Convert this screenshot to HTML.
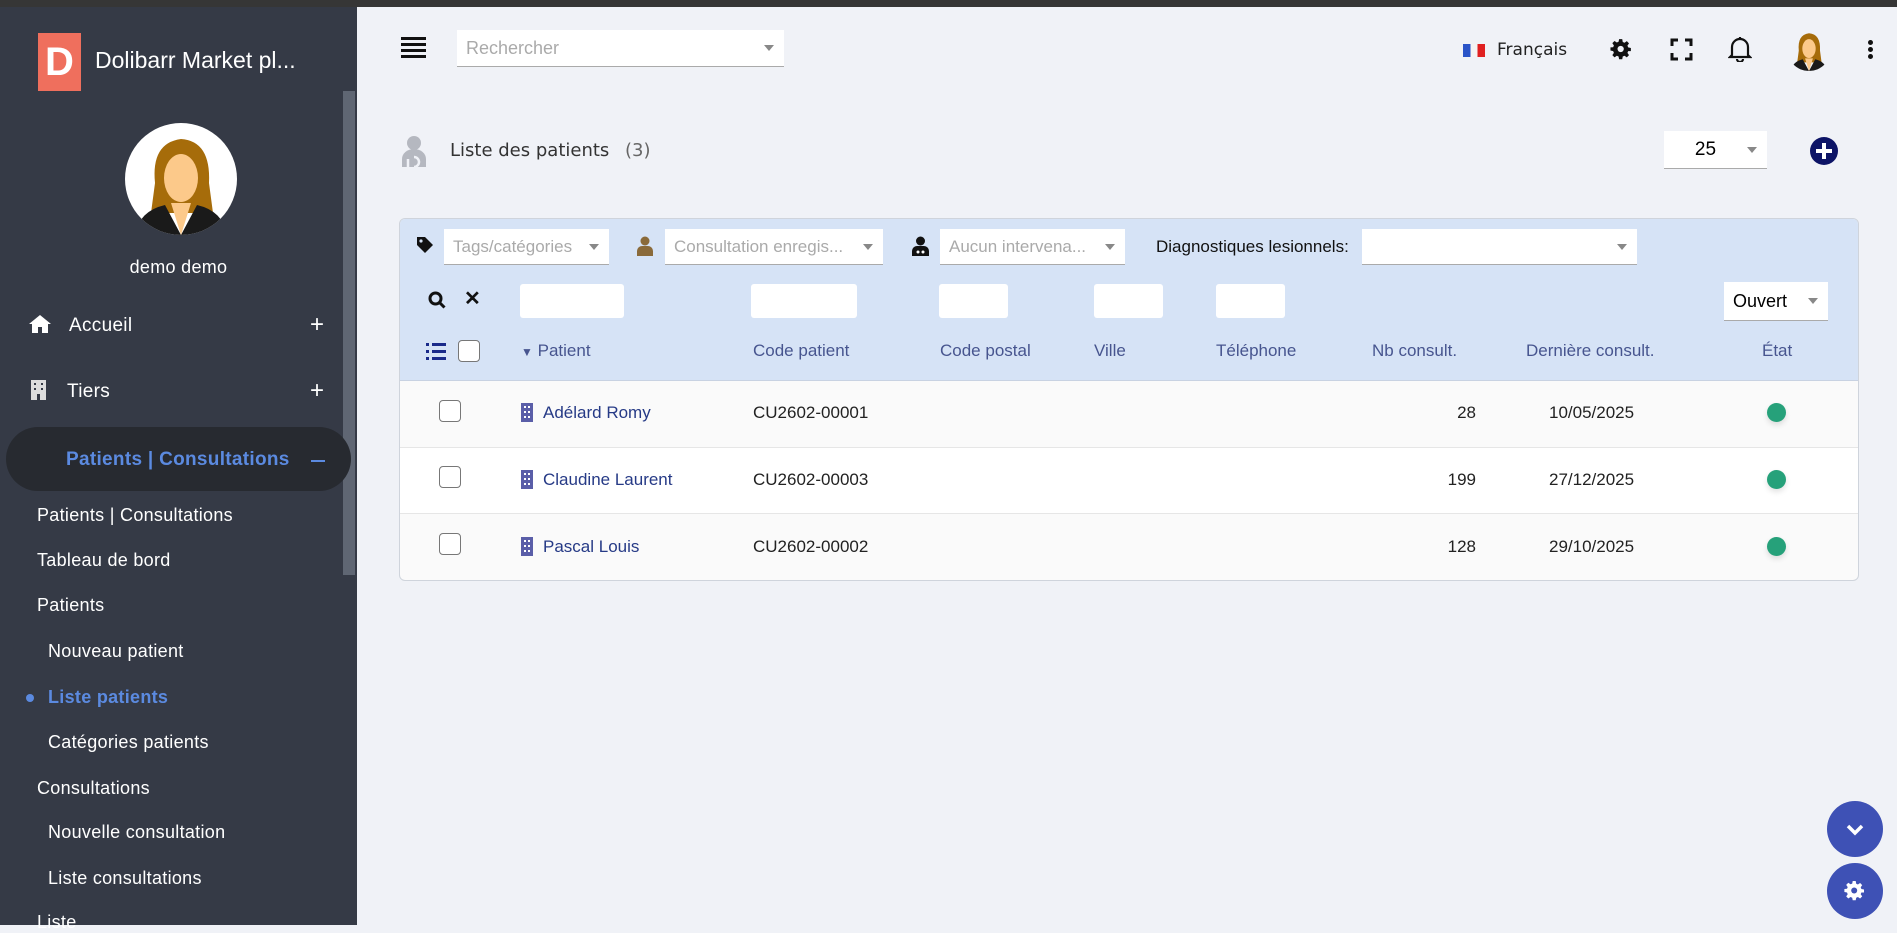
<!DOCTYPE html>
<html><head><meta charset="utf-8"><style>
*{box-sizing:border-box;margin:0;padding:0}
body{width:1897px;height:918px;overflow:hidden;background:#f0f2f7;font-family:"Liberation Sans",sans-serif;position:relative}
.a{position:absolute}
.sb{left:0;top:0;width:357px;height:918px;background:#353a46}
.side{color:#fff;font-size:18px;letter-spacing:.3px;white-space:nowrap}
.sel{background:#fff;border-bottom:1px solid #aaa;color:#aaa;font-size:17px;padding-left:9px;display:flex;align-items:center;white-space:nowrap;overflow:hidden}
.caret{position:absolute;right:10px;top:50%;margin-top:-3px;border-left:5px solid transparent;border-right:5px solid transparent;border-top:6px solid #888}
.inp{background:#fff;border-radius:3px;height:34px;top:284px}
.th{top:341px;color:#47558f;font-size:17px}
.td{font-size:17px;color:#222}
.cb{width:22px;height:22px;border:1.5px solid #777;border-radius:4px;background:#fff}
.nm{color:#263a86}
.dot{width:19px;height:19px;border-radius:50%;background:#26a17a;box-shadow:0 3px 6px rgba(0,0,0,.12)}
.bld{width:11px;height:19px;background:#5a5ea8;background-image:linear-gradient(90deg,transparent 3px,#fff 3px 4px,transparent 4px 7px,#fff 7px 8px,transparent 8px),linear-gradient(#5a5ea8 0 0);}
</style></head><body>
<div class="a" style="left:0;top:0;width:1897px;height:7px;background:#363636"></div>
<div class="a sb" style="top:7px"></div>
<div class="a" style="left:343px;top:91px;width:12px;height:484px;background:#5f6673"></div>
<div class="a" style="left:38px;top:33px;width:43px;height:58px;background:#ef6f5d;color:#fff;font:bold 40px 'Liberation Sans';text-align:center;line-height:58px">D</div>
<div class="a side" style="left:95px;top:47px;font-size:23px;letter-spacing:0">Dolibarr Market pl...</div>
<div class="a" style="left:125px;top:123px;width:112px;height:112px;border-radius:50%;background:#fff;overflow:hidden">
<svg width="112" height="112" viewBox="0 0 112 112"><path d="M30 60 Q26 20 56 16 Q86 18 84 60 L88 90 L26 90 Z" fill="#a66c0a"/><ellipse cx="56" cy="55" rx="17" ry="24" fill="#fcc98a"/><path d="M40 40 Q56 18 74 42 L74 30 Q56 10 38 32Z" fill="#a66c0a"/><path d="M10 112 Q14 88 40 82 L56 112 L72 82 Q98 88 102 112Z" fill="#1a1a1a"/><path d="M46 80 L56 112 L66 80Z" fill="#fcc98a"/></svg></div>
<div class="a side" style="left:0;width:357px;text-align:center;top:257px;font-size:18px">demo demo</div>
<svg class="a" style="left:29px;top:314px" width="22" height="19" viewBox="0 0 22 19"><path d="M11 1L0 10h3v9h6v-6h4v6h6v-9h3z" fill="#fff"/></svg>
<div class="a side" style="left:69px;top:315px;font-size:19px">Accueil</div>
<div class="a side" style="left:310px;top:311px;font-size:24px">+</div>
<svg class="a" style="left:30px;top:380px" width="17" height="20" viewBox="0 0 17 20"><rect x="1" y="0" width="15" height="20" fill="#ddd"/><g fill="#353a46"><rect x="4" y="3" width="2" height="2"/><rect x="11" y="3" width="2" height="2"/><rect x="4" y="8" width="2" height="2"/><rect x="11" y="8" width="2" height="2"/><rect x="7" y="14" width="3" height="6"/></g></svg>
<div class="a side" style="left:67px;top:381px;font-size:19px">Tiers</div>
<div class="a side" style="left:310px;top:377px;font-size:24px">+</div>
<div class="a" style="left:6px;top:427px;width:345px;height:64px;border-radius:32px;background:#272a30"></div>
<div class="a side" style="left:66px;top:449px;font-size:19px;color:#5b8ae0;font-weight:bold">Patients | Consultations</div>
<div class="a" style="left:311px;top:460px;width:14px;height:2px;background:#5b8ae0"></div>
<div class="a side" style="left:37px;top:505px">Patients | Consultations</div>
<div class="a side" style="left:37px;top:550px">Tableau de bord</div>
<div class="a side" style="left:37px;top:595px">Patients</div>
<div class="a side" style="left:48px;top:641px">Nouveau patient</div>
<div class="a" style="left:26px;top:694px;width:8px;height:8px;border-radius:50%;background:#5b8ae0"></div>
<div class="a side" style="left:48px;top:687px;color:#5b8ae0;font-weight:bold">Liste patients</div>
<div class="a side" style="left:48px;top:732px">Catégories patients</div>
<div class="a side" style="left:37px;top:778px">Consultations</div>
<div class="a side" style="left:48px;top:822px">Nouvelle consultation</div>
<div class="a side" style="left:48px;top:868px">Liste consultations</div>
<div class="a side" style="left:37px;top:912px">Liste</div>

<div class="a" style="left:401px;top:37px;width:25px;height:3px;background:#111;box-shadow:0 6px 0 #111,0 12px 0 #111,0 18px 0 #111"></div>
<div class="a sel" style="left:457px;top:30px;width:327px;height:37px;font-size:18px;border-bottom:1.5px solid #aaa">Rechercher<span class="caret"></span></div>
<div class="a" style="left:1463px;top:44px;width:22px;height:13px;background:linear-gradient(90deg,#2a54c8 33%,#f4f4f4 33% 66%,#e02020 66%)"></div>
<div class="a" style="left:1497px;top:40px;color:#222;font-family:'DejaVu Sans',sans-serif;font-size:17px">Français</div>
<svg class="a" style="left:1609px;top:37px" width="25" height="25" viewBox="0 0 24 24"><path fill="#111" d="M21 13.5v-3l-2.6-.5-.7-1.7 1.5-2.2-2.1-2.1-2.2 1.5-1.7-.7L12.7 2h-3l-.5 2.6-1.7.7-2.2-1.5-2.1 2.1 1.5 2.2-.7 1.7L1.4 10v3l2.6.5.7 1.7-1.5 2.2 2.1 2.1 2.2-1.5 1.7.7.5 2.6h3l.5-2.6 1.7-.7 2.2 1.5 2.1-2.1-1.5-2.2.7-1.7z"/><circle cx="11.2" cy="11.5" r="3" fill="#f0f2f7"/></svg>
<svg class="a" style="left:1670px;top:38px" width="23" height="23" viewBox="0 0 23 23" fill="none" stroke="#111" stroke-width="3"><path d="M2 8V2h6M15 2h6v6M21 15v6h-6M8 21H2v-6"/></svg>
<svg class="a" style="left:1728px;top:36px" width="24" height="26" viewBox="0 0 24 26" fill="none" stroke="#111" stroke-width="2.2"><path d="M4 19V11a8 8 0 0116 0v8l2 2H2z"/><path d="M9 23a3 3 0 006 0"/><path d="M12 1v2"/></svg>
<div class="a" style="left:1787px;top:27px;width:44px;height:44px;border-radius:50%;overflow:hidden"><svg width="44" height="44" viewBox="0 0 112 112"><path d="M30 60 Q26 20 56 16 Q86 18 84 60 L88 90 L26 90 Z" fill="#a66c0a"/><ellipse cx="56" cy="55" rx="17" ry="24" fill="#fcc98a"/><path d="M10 112 Q14 88 40 82 L56 112 L72 82 Q98 88 102 112Z" fill="#1a1a1a"/><path d="M46 80 L56 112 L66 80Z" fill="#fcc98a"/></svg></div>
<div class="a" style="left:1868px;top:40px;width:5px;height:5px;border-radius:50%;background:#111;box-shadow:0 7px 0 #111,0 14px 0 #111"></div>

<svg class="a" style="left:400px;top:135px" width="28" height="32" viewBox="0 0 28 32"><circle cx="14" cy="8" r="7" fill="#b5b8c0"/><path d="M2 32V24a12 10 0 0124 0v8z" fill="#b5b8c0"/><path d="M8 24v8M14 22a5 5 0 010 10" stroke="#f0f2f7" stroke-width="2.5" fill="none"/></svg>
<div class="a" style="left:450px;top:140px;color:#333;font-family:'DejaVu Sans',sans-serif;font-size:18px">Liste des patients <span style="color:#666;margin-left:10px">(3)</span></div>
<div class="a sel" style="left:1664px;top:131px;width:103px;height:38px;color:#000;font-size:19px;justify-content:center;padding:0 20px 0 0">25<span class="caret"></span></div>
<div class="a" style="left:1810px;top:137px;width:28px;height:28px;border-radius:50%;background:#0d1466"><div class="a" style="left:6px;top:12px;width:16px;height:4px;background:#fff"></div><div class="a" style="left:12px;top:6px;width:4px;height:16px;background:#fff"></div></div>

<div class="a" style="left:399px;top:218px;width:1460px;height:363px;border:1px solid #cfd4dc;border-radius:6px;background:#fafafa;overflow:hidden">
<div class="a" style="left:0;top:0;width:1460px;height:162px;background:#d6e3f6;border-bottom:1px solid #c8d2e2"></div>
<div class="a" style="left:0;top:228px;width:1460px;height:67px;background:#fff;border-top:1px solid #e6e6e6;border-bottom:1px solid #e6e6e6"></div>
</div>
<svg class="a" style="left:416px;top:236px" width="18" height="18" viewBox="0 0 18 18"><path d="M1 1h8l8 8-8 8-8-8z" fill="#111"/><circle cx="5" cy="5" r="1.6" fill="#d6e3f6"/></svg>
<div class="a sel" style="left:444px;top:229px;width:165px;height:36px">Tags/catégories<span class="caret"></span></div>
<svg class="a" style="left:637px;top:236px" width="16" height="20" viewBox="0 0 16 20"><circle cx="8" cy="5" r="4.5" fill="#8a6a3a"/><path d="M0 20v-5a5 5 0 015-5h6a5 5 0 015 5v5z" fill="#8a6a3a"/></svg>
<div class="a sel" style="left:665px;top:229px;width:218px;height:36px">Consultation enregis...<span class="caret"></span></div>
<svg class="a" style="left:912px;top:236px" width="17" height="20" viewBox="0 0 17 20"><circle cx="8.5" cy="5" r="4.5" fill="#111"/><path d="M0 20v-5a5 5 0 015-5h7a5 5 0 015 5v5z" fill="#111"/><circle cx="6" cy="16" r="1.5" fill="#fff"/><circle cx="11" cy="16" r="1.5" fill="#fff"/></svg>
<div class="a sel" style="left:940px;top:229px;width:185px;height:36px">Aucun intervena...<span class="caret"></span></div>
<div class="a" style="left:1156px;top:237px;font-size:17px;color:#111">Diagnostiques lesionnels:</div>
<div class="a sel" style="left:1362px;top:229px;width:275px;height:36px"><span class="caret"></span></div>

<svg class="a" style="left:428px;top:291px" width="18" height="18" viewBox="0 0 18 18" fill="none" stroke="#111" stroke-width="3"><circle cx="7.5" cy="7.5" r="5.5"/><path d="M11.5 11.5l5 5"/></svg>
<div class="a" style="left:464px;top:286px;font-size:20px;font-weight:bold;color:#111">✕</div>
<div class="a inp" style="left:520px;width:104px"></div>
<div class="a inp" style="left:751px;width:106px"></div>
<div class="a inp" style="left:939px;width:69px"></div>
<div class="a inp" style="left:1094px;width:69px"></div>
<div class="a inp" style="left:1216px;width:69px"></div>
<div class="a sel" style="left:1724px;top:282px;width:104px;height:39px;color:#000;font-size:18px">Ouvert<span class="caret"></span></div>

<svg class="a" style="left:426px;top:343px" width="20" height="17" viewBox="0 0 20 17" fill="#1a2a8a"><rect x="0" y="0" width="3" height="3"/><rect x="6" y="0" width="14" height="3"/><rect x="0" y="7" width="3" height="3"/><rect x="6" y="7" width="14" height="3"/><rect x="0" y="14" width="3" height="3"/><rect x="6" y="14" width="14" height="3"/></svg>
<div class="a cb" style="left:458px;top:340px"></div>
<div class="a th" style="left:521px"><span style="font-size:12px">▼</span> Patient</div>
<div class="a th" style="left:753px">Code patient</div>
<div class="a th" style="left:940px">Code postal</div>
<div class="a th" style="left:1094px">Ville</div>
<div class="a th" style="left:1216px">Téléphone</div>
<div class="a th" style="left:1372px">Nb consult.</div>
<div class="a th" style="left:1526px">Dernière consult.</div>
<div class="a th" style="left:1762px">État</div>

<div class="a cb" style="left:439px;top:400px"></div>
<svg class="a" style="left:521px;top:403px" width="12" height="19" viewBox="0 0 12 19"><rect width="12" height="19" fill="#5a5ea8"/><g fill="#fff"><rect x="3" y="3" width="2" height="2"/><rect x="7" y="3" width="2" height="2"/><rect x="3" y="8" width="2" height="2"/><rect x="7" y="8" width="2" height="2"/><rect x="3" y="13" width="2" height="2"/><rect x="7" y="13" width="2" height="2"/></g></svg>
<div class="a td nm" style="left:543px;top:403px">Adélard Romy</div>
<div class="a td" style="left:753px;top:403px">CU2602-00001</div>
<div class="a td" style="left:1400px;width:76px;text-align:right;top:403px">28</div>
<div class="a td" style="left:1549px;top:403px">10/05/2025</div>
<div class="a dot" style="left:1767px;top:403px"></div>

<div class="a cb" style="left:439px;top:466px"></div>
<svg class="a" style="left:521px;top:470px" width="12" height="19" viewBox="0 0 12 19"><rect width="12" height="19" fill="#5a5ea8"/><g fill="#fff"><rect x="3" y="3" width="2" height="2"/><rect x="7" y="3" width="2" height="2"/><rect x="3" y="8" width="2" height="2"/><rect x="7" y="8" width="2" height="2"/><rect x="3" y="13" width="2" height="2"/><rect x="7" y="13" width="2" height="2"/></g></svg>
<div class="a td nm" style="left:543px;top:470px">Claudine Laurent</div>
<div class="a td" style="left:753px;top:470px">CU2602-00003</div>
<div class="a td" style="left:1400px;width:76px;text-align:right;top:470px">199</div>
<div class="a td" style="left:1549px;top:470px">27/12/2025</div>
<div class="a dot" style="left:1767px;top:470px"></div>

<div class="a cb" style="left:439px;top:533px"></div>
<svg class="a" style="left:521px;top:537px" width="12" height="19" viewBox="0 0 12 19"><rect width="12" height="19" fill="#5a5ea8"/><g fill="#fff"><rect x="3" y="3" width="2" height="2"/><rect x="7" y="3" width="2" height="2"/><rect x="3" y="8" width="2" height="2"/><rect x="7" y="8" width="2" height="2"/><rect x="3" y="13" width="2" height="2"/><rect x="7" y="13" width="2" height="2"/></g></svg>
<div class="a td nm" style="left:543px;top:537px">Pascal Louis</div>
<div class="a td" style="left:753px;top:537px">CU2602-00002</div>
<div class="a td" style="left:1400px;width:76px;text-align:right;top:537px">128</div>
<div class="a td" style="left:1549px;top:537px">29/10/2025</div>
<div class="a dot" style="left:1767px;top:537px"></div>

<div class="a" style="left:1827px;top:801px;width:56px;height:56px;border-radius:50%;background:#3e51b5"><svg width="56" height="56" viewBox="0 0 56 56" fill="none" stroke="#fff" stroke-width="3.5"><path d="M21 25l7 7 7-7"/></svg></div>
<div class="a" style="left:1827px;top:863px;width:56px;height:56px;border-radius:50%;background:#3e51b5"><svg class="a" style="left:16px;top:16px" width="24" height="24" viewBox="0 0 24 24"><path fill="#fff" d="M21 13.5v-3l-2.6-.5-.7-1.7 1.5-2.2-2.1-2.1-2.2 1.5-1.7-.7L12.7 2h-3l-.5 2.6-1.7.7-2.2-1.5-2.1 2.1 1.5 2.2-.7 1.7L1.4 10v3l2.6.5.7 1.7-1.5 2.2 2.1 2.1 2.2-1.5 1.7.7.5 2.6h3l.5-2.6 1.7-.7 2.2 1.5 2.1-2.1-1.5-2.2.7-1.7z"/><circle cx="11.2" cy="11.5" r="3" fill="#3e51b5"/></svg></div>
</body></html>
